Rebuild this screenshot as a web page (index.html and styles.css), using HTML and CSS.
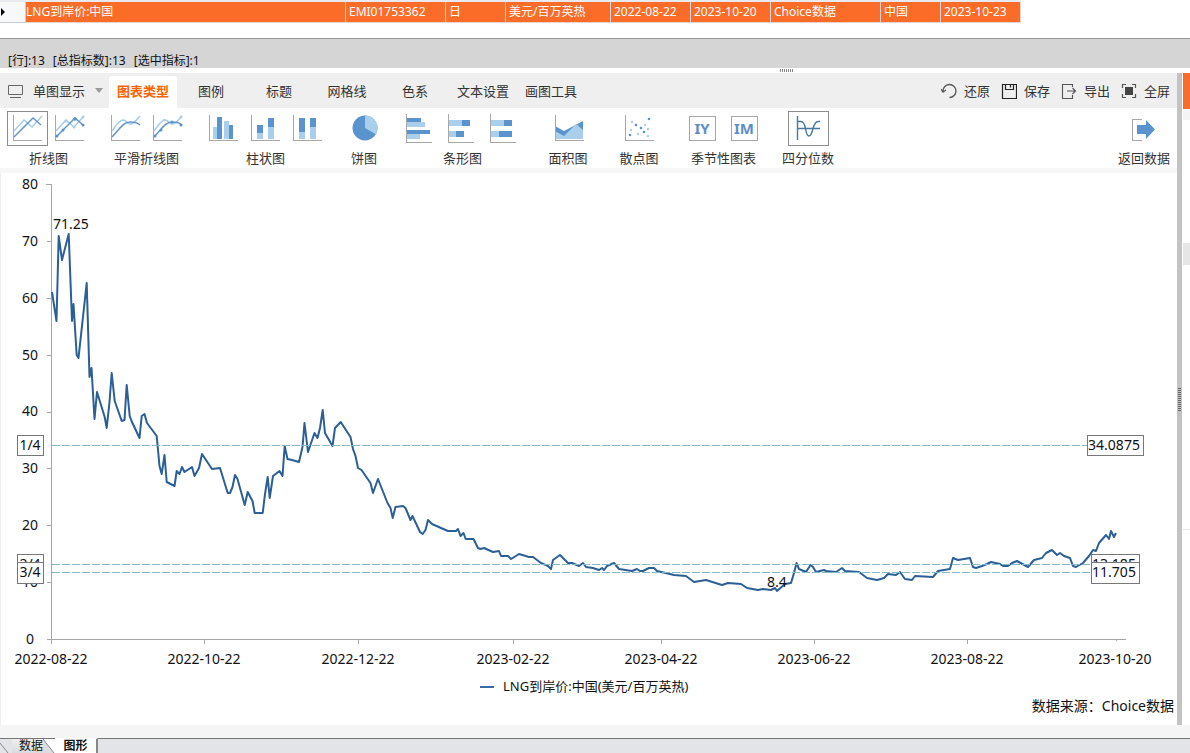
FILE: index.html
```html
<!DOCTYPE html>
<html lang="zh-CN">
<head>
  <meta charset="UTF-8" />
  <title>LNG到岸价:中国</title>
  <link rel="stylesheet" href="styles.css">
</head>
<body>

  <!-- Selected indicator row -->
  <table class="indicators">
    <colgroup>
      <col class="col-mark"><col class="col-name"><col class="col-code"><col class="col-freq"><col class="col-unit">
      <col class="col-date"><col class="col-date"><col class="col-source"><col class="col-area"><col class="col-date">
    </colgroup>
    <tr>
      <th scope="row"><svg width="5" height="8" viewBox="0 0 5 8"><path d="M1 0L5 4L1 8Z"/></svg></th>
      <td>LNG到岸价:中国</td>
      <td>EMI01753362</td>
      <td>日</td>
      <td>美元/百万英热</td>
      <td>2022-08-22</td>
      <td>2023-10-20</td>
      <td>Choice数据</td>
      <td>中国</td>
      <td>2023-10-23</td>
    </tr>
  </table>

  <div class="status">
    <span>[行]:13</span>
    <span>[总指标数]:13</span>
    <span>[选中指标]:1</span>
  </div>
  <div class="splitter"><i></i></div>

  <div class="workspace">
    <main class="panel">

      <!-- Menu tabs -->
      <nav class="menu">
        <div class="view">
          <svg width="16" height="16" viewBox="0 0 16 16" fill="none" stroke="#666"><path d="M1.5 2.5h14v9h-14zM3 14.5h11"/></svg>
          <select aria-label="显示方式">
            <option>单图显示</option>
          </select>
          <svg class="caret" width="8" height="6" viewBox="0 0 8 6"><path d="M0 0h8L4 5Z" fill="#999"/></svg>
        </div>
        <button class="tab active">图表类型</button>
        <button class="tab">图例</button>
        <button class="tab">标题</button>
        <button class="tab">网格线</button>
        <button class="tab">色系</button>
        <button class="tab">文本设置</button>
        <button class="tab">画图工具</button>
        <div class="actions">
          <button>
            <svg width="16" height="16" viewBox="0 0 16 16" fill="none" stroke="#555" stroke-width="1.3"><path d="M2 8.5A6.5 6.5 0 1 1 8.5 14.5M0 6l2 3L5 7"/></svg>
            还原
          </button>
          <button>
            <svg width="16" height="16" viewBox="0 0 16 16" fill="none" stroke="#222" stroke-width="1.2"><path d="M1.5 1.5h14v14h-14zM4.500 1.5v5h8v-5M9.500 2v2.500"/></svg>
            保存
          </button>
          <button>
            <svg width="16" height="16" viewBox="0 0 16 16" fill="none" stroke="#555" stroke-width="1.1"><path d="M11.5 4V1.5h-10v14h10V12M6 8h8.5M11.5 5l3 3l-3 3"/></svg>
            导出
          </button>
          <button>
            <svg width="16" height="16" viewBox="0 0 16 16" fill="none" stroke="#555" stroke-width="1.2"><path d="M1.5 5V1.5H5M11 1.5h3.5V5M14.5 11v3.5H11M5 14.500H1.5V11"/><path d="M4 4h8v8H4z" fill="#444" stroke="none"/></svg>
            全屏
          </button>
        </div>
      </nav>

      <!-- Chart types -->
      <div class="types">
        <div class="group">
          <div class="icons">
            <button class="selected" aria-label="折线图">
              <svg viewBox="0 0 39 33"><path class="axis" d="M5 3v25h29"/><path class="line light" d="M6 19L16 8L24 15L34 4"/><path class="line dark" d="M6 25L25 6L33 13"/></svg>
            </button>
            <button aria-label="带标记折线图">
              <svg viewBox="0 0 39 33"><path class="axis" d="M5 3v25h29"/><path class="line light" d="M6 19L16 8L24 15L34 4"/><path class="line dark" d="M6 25L25 6L33 13"/><g class="fill-dark"><circle cx="7" cy="24" r="1.5"/><circle cx="13" cy="18" r="1.5"/><circle cx="25" cy="7" r="1.8"/><circle cx="33" cy="13" r="1.5"/></g><g class="fill-light"><circle cx="16" cy="9" r="1.5"/><circle cx="24" cy="15" r="1.5"/><circle cx="33" cy="5" r="1.5"/></g></svg>
            </button>
          </div>
          <span>折线图</span>
        </div>

        <div class="group">
          <div class="icons">
            <button aria-label="平滑折线图">
              <svg viewBox="0 0 39 33"><path class="axis" d="M5 3v25h29"/><path class="line light" d="M6 19C10 14 13 8 17 8S21 13 25 12S30 8 34 4"/><path class="line dark" d="M6 25C14 17 17 10 24 10S31 11 34 13"/></svg>
            </button>
            <button aria-label="带标记平滑折线图">
              <svg viewBox="0 0 39 33"><path class="axis" d="M5 3v25h29"/><path class="line light" d="M6 19C10 14 13 8 17 8S21 13 25 12S30 8 34 4"/><path class="line dark" d="M6 25C14 17 17 10 24 10S31 11 34 13"/><g class="fill-dark"><circle cx="7" cy="24" r="1.5"/><circle cx="13" cy="18" r="1.5"/><circle cx="24" cy="10" r="1.5"/><circle cx="33" cy="13" r="1.5"/></g><g class="fill-light"><circle cx="16" cy="8" r="1.3"/><circle cx="33" cy="5" r="1.5"/></g></svg>
            </button>
          </div>
          <span>平滑折线图</span>
        </div>

        <div class="group">
          <div class="icons">
            <button aria-label="柱状图">
              <svg viewBox="0 0 39 33"><path class="axis" d="M5 3v25h29"/><path class="fill-light" d="M9 15h4v12H9zM20 9h5v18h-5z"/><path class="fill-dark" d="M13 5h5v22h-5zM25 13h4v14h-4z"/></svg>
            </button>
            <button aria-label="堆积柱状图">
              <svg viewBox="0 0 39 33"><path class="axis" d="M5 3v25h29"/><path class="fill-light" d="M11 21h6v6h-6zM22 15h6v12h-6z"/><path class="fill-dark" d="M11 13h6v8h-6zM22 6h6v9h-6z"/></svg>
            </button>
            <button aria-label="百分比柱状图">
              <svg viewBox="0 0 39 33"><path class="axis" d="M5 3v25h29"/><path class="fill-light" d="M11 20h6v7h-6zM22 15h6v12h-6z"/><path class="fill-dark" d="M11 6h6v14h-6zM22 6h6v9h-6z"/></svg>
            </button>
          </div>
          <span>柱状图</span>
        </div>

        <div class="group narrow">
          <div class="icons">
            <button aria-label="饼图">
              <svg viewBox="0 0 39 33"><circle class="fill-dark" cx="20" cy="16" r="12.5"/><path class="fill-light" d="M20 16V3.500A12.5 12.5 0 0 1 30.800 22.300Z"/></svg>
            </button>
          </div>
          <span>饼图</span>
        </div>

        <div class="group">
          <div class="icons">
            <button aria-label="条形图">
              <svg viewBox="0 0 39 33"><path class="axis" d="M5 2v28h26"/><path class="fill-light" d="M6 10h18v5H6zM6 22h13v5H6z"/><path class="fill-dark" d="M6 6h14v4H6zM6 18h23v4H6z"/></svg>
            </button>
            <button aria-label="堆积条形图">
              <svg viewBox="0 0 39 33"><path class="axis" d="M5 2v28h26"/><path class="fill-light" d="M6 8h13v6H6zM6 19h7v6H6z"/><path class="fill-dark" d="M19 8h8v6h-8zM13 19h8v6h-8z"/></svg>
            </button>
            <button aria-label="百分比条形图">
              <svg viewBox="0 0 39 33"><path class="axis" d="M5 2v28h26"/><path class="fill-light" d="M6 8h13v6H6zM6 19h8v6H6z"/><path class="fill-dark" d="M19 8h8v6h-8zM14 19h13v6H14z"/></svg>
            </button>
          </div>
          <span>条形图</span>
        </div>

        <div class="group single">
          <div class="icons">
            <button aria-label="面积图">
              <svg viewBox="0 0 39 33"><path class="fill-dark" d="M6 14L15 19L34 9V27H6Z"/><path class="fill-light" d="M6 19L15 24L27 12L34 18V27H6Z"/><path class="axis" d="M6 3v25h29"/></svg>
            </button>
          </div>
          <span>面积图</span>
        </div>

        <div class="group single">
          <div class="icons">
            <button aria-label="散点图">
              <svg viewBox="0 0 39 33"><path class="axis" d="M5 3v25h29"/><g class="fill-dark"><circle cx="29" cy="7" r="1.3"/><circle cx="16" cy="13" r="1.3"/><circle cx="21" cy="16" r="1.3"/><circle cx="24" cy="20" r="1.3"/><circle cx="10" cy="23" r="1.3"/></g><g class="fill-light"><circle cx="12" cy="10" r="1.2"/><circle cx="25" cy="13" r="1.2"/><circle cx="11" cy="18" r="1.2"/><circle cx="28" cy="17" r="1.2"/><circle cx="18" cy="22" r="1.2"/><circle cx="28" cy="24" r="1.2"/></g></svg>
            </button>
          </div>
          <span>散点图</span>
        </div>

        <div class="group">
          <div class="icons">
            <button aria-label="年度季节性图表">
              <svg viewBox="0 0 39 33"><path class="axis" d="M6 4h26v24H6z"/><text class="season" x="19" y="22">IY</text></svg>
            </button>
            <button aria-label="月度季节性图表">
              <svg viewBox="0 0 39 33"><path class="axis" d="M6 4h26v24H6z"/><text class="season" x="19" y="22">IM</text></svg>
            </button>
          </div>
          <span>季节性图表</span>
        </div>

        <div class="group single">
          <div class="icons">
            <button class="selected" aria-label="四分位数">
              <svg viewBox="0 0 39 33" fill="none" stroke="#47789f" stroke-width="1.4"><path d="M8.500 4v24M8.500 16.500H31M8.500 9.500H12C18 9.500 15.500 24 20 24S23 9.500 29 9.500H31"/></svg>
            </button>
          </div>
          <span>四分位数</span>
        </div>

        <div class="group back">
          <div class="icons">
            <button aria-label="返回数据">
              <svg viewBox="0 0 39 33"><path class="axis" d="M18 7H8v21h10"/><path class="fill-dark" d="M13 13h9V8l9 9.500l-9 9.500v-5h-9z"/></svg>
            </button>
          </div>
          <span>返回数据</span>
        </div>
      </div>

      <!-- Price chart -->
      <svg class="chart" viewBox="0 173 1177 552" role="img" aria-label="LNG到岸价:中国(美元/百万英热)">
        <path class="frame" d="M51 184V639H1126M46 184h5M47 241h4M47 298h4M47 355h4M47 412h4M47 468h4M47 525h4M47 582h4M47 639h4M51 639v5M204 639v5M358 639v5M513 639v5M661 639v5M814 639v5M967 639v5M1116 639v2"/>

        <g class="ylabels">
          <text x="30" y="189">80</text>
          <text x="30" y="246">70</text>
          <text x="30" y="303">60</text>
          <text x="30" y="360">50</text>
          <text x="30" y="416">40</text>
          <text x="30" y="473">30</text>
          <text x="30" y="530">20</text>
          <text x="30" y="587">10</text>
          <text x="30" y="644">0</text>
        </g>
        <g class="xlabels">
          <text x="51" y="664">2022-08-22</text>
          <text x="204" y="664">2022-10-22</text>
          <text x="358" y="664">2022-12-22</text>
          <text x="513" y="664">2023-02-22</text>
          <text x="661" y="664">2023-04-22</text>
          <text x="814" y="664">2023-06-22</text>
          <text x="967" y="664">2023-08-22</text>
          <text x="1115" y="664">2023-10-20</text>
        </g>

        <polyline class="price" points="52,292 56.5,321 58.7,236 62,260 68.7,234 72,321 73.5,304 76.7,355 78.5,358 86.7,283 89.5,377 91.5,368 94.5,419 97,392 104.7,417 106.7,428 109.5,402 111.7,373 114.7,401 121.7,421 124.5,420 126.7,385 129.7,416 131.5,421 139.5,438 141.7,416 144.5,414 147,423 156.7,436 159.5,466 161.7,474 164.5,455 166.7,482 174.5,486 176.7,471 179.5,474 182,467 184.5,472 192,467 194.5,476 199,468 202,454 212,469 220,468 227.7,493 230,493 232.5,487 235,475 237.5,479 244.7,505 247.7,492 252.5,501 254.7,513 262.7,513 265,494 267.7,477 269.7,498 273,476 279.5,471 282.5,476 284.7,446 287.5,459 292,460 299,462 302.5,447 304.5,423 308,452 314.5,433 317.5,438 320,428 322.7,410 325,433 332.5,446 335,428 340.7,422 350.5,437 353,449 355.5,456 358,468 361.5,470 370.5,483 373,493 378,479 387.5,503 390.5,508 392.7,518 395.5,507 403,506 405.5,508 408,514 410.5,520 412.5,516 420,532 422.7,534 425.5,530 428,520 432,524 441,528 448,531 456,531 458,529 460.5,536 463.5,533 465.7,539 473.5,539 478,548 480.5,549 484,548 493,552 499,551 501,556 508,556 511,559 519,554 529,557 533,557 541,563 548,566 551,569 553,560 560,555 568,563 572,563 579,566 583,563 586,567 593,568 599,570 602,568 604,570 607,566 614,563 619,569 632,571 637,569 640,571 643,571 649,568 654,568 657,571 674,575 686,576 694,582 706,580 722,585 728,583 741,584 747,588 758,590 763,589 771,590 775,588 777,591 785,584 791,583 794,573 796.5,563 799,569 806,572 810.5,565 813,567 816,572 824,570 826,571 836,572 842,568 845,571 859,572 867,578 877,580 884,578 888,574 896,575 900,572 905,579 912,580 915,576 933,577 938,571 950,569 953,558 958,560 970,558 973,567 976,568 982,566 987,564 991,562 1000,564 1003,566 1008,566 1012,563 1017,561 1028,567 1034,560 1042,558 1046,553 1052,550 1057,555 1060,553 1064,556 1070,558 1073,566 1076,567 1083,563 1089,556 1093,550 1096,551 1099,543 1106,535 1109,539 1111,531 1114,537 1116,533"/>

        <!-- Quartile lines -->
        <path class="quartile" d="M52 445H1087M52 564H1091M52 572H1091"/>

        <text x="53" y="229">71.25</text>
        <text x="767" y="587">8.4</text>

        <g class="tags">
          <rect x="17" y="435" width="26" height="20"/><text x="30" y="450">1/4</text>
          <rect x="1087" y="435" width="56" height="20"/><text x="1114" y="450">34.0875</text>
          <rect x="17" y="554" width="26" height="20"/><text x="30" y="569">2/4</text>
          <rect x="1091" y="554" width="48" height="20"/><text x="1114" y="569">13.185</text>
          <rect x="17" y="562" width="26" height="21"/><text x="30" y="577">3/4</text>
          <rect x="1091" y="562" width="48" height="21"/><text x="1114" y="577">11.705</text>
        </g>

        <path class="key" d="M480 687h14"/>
        <text class="legend" x="503" y="691">LNG到岸价:中国(美元/百万英热)</text>
        <text class="source" x="1174" y="711">数据来源：Choice数据</text>
      </svg>
    </main>

    <div class="divider"><i></i></div>
    <aside class="side">
      <div class="side-active"></div>
      <div class="side-head"></div>
      <div class="side-thumb"></div>
      <div class="side-line"></div>
    </aside>
  </div>

  <!-- Sheet tabs -->
  <footer class="sheets">
    <svg width="12" height="14" viewBox="0 0 12 14"><path d="M0 4L8 14" fill="none" stroke="#888"/></svg>
    <button class="sheet data">数据</button>
    <svg width="12" height="14" viewBox="0 0 12 14"><path d="M0 0L11 14H0Z" fill="#dcdde0"/><path d="M0 0H12V14H11Z" fill="#fff"/><path d="M0 0L11 14" stroke="#888"/></svg>
    <button class="sheet current">图形</button>
  </footer>

</body>
</html>
```
FILE: styles.css
```css
* {
  box-sizing: border-box;
}
body {
  font-family: "Noto Sans", "Noto Sans CJK SC", sans-serif;
  font-size: 13px;
  margin: 0;
  background: #fff;
  color: #333;
  min-height: 100vh;
  display: flex;
  flex-direction: column;
}
button, select {
  font: inherit;
  color: inherit;
  background: none;
  border: none;
  padding: 0;
  white-space: nowrap;
  cursor: pointer;
}
svg {
  display: block;
  flex: none;
}

/* indicator table */
.indicators {
  table-layout: fixed;
  width: 1020px;
  border-collapse: separate;
  border-spacing: 0;
  border-top: 2px solid #e8eaf0;
  font-size: 12px;
  line-height: 20px;
  margin-bottom: 15px;
}
.indicators th {
  padding: 0;
  background: #f7f8fa;
  border-right: 1px solid #c9ccd6;
  border-bottom: 1px solid #c9ccd6;
}
.indicators td {
  padding: 0 0 0 3px;
  background: #fa6c28;
  color: #fff;
  border-right: 1px solid #e6d6d0;
  border-bottom: 1px solid #e6d6d0;
  white-space: nowrap;
}
.indicators td:nth-child(2) {
  padding-left: 0;
}
.col-mark { width: 26px; }
.col-name { width: 320px; }
.col-code { width: 100px; }
.col-freq { width: 60px; }
.col-unit { width: 105px; }
.col-date { width: 80px; }
.col-source { width: 110px; }
.col-area { width: 60px; }

.status {
  display: flex;
  gap: 8px;
  height: 30px;
  padding: 14px 8px 0;
  background: #d5d5d5;
  border-top: 1px solid #999;
  color: #111;
  font-size: 12px;
  line-height: 16px;
}
.splitter {
  height: 5px;
  padding-left: 384px;
  display: flex;
  justify-content: center;
}
.splitter i {
  width: 14px;
  height: 3px;
  margin-top: 1px;
  background: repeating-linear-gradient(90deg, #888 0 1px, #fff 1px 2px);
}

/* workspace */
.workspace {
  display: flex;
}
.panel {
  flex: 1;
  min-width: 0;
}
.menu {
  display: flex;
  height: 35px;
  background: #efefef;
}
.view {
  display: flex;
  align-items: center;
  width: 109px;
  padding-left: 7px;
}
.view select {
  width: 70px;
  margin-left: 10px;
  appearance: none;
}
.caret {
  margin-left: -8px;
  pointer-events: none;
}
.tab {
  width: 68px;
}
.tab.active {
  background: #fff;
  color: #fa6400;
  font-weight: bold;
  margin-top: 3px;
  padding-bottom: 4px;
  border-radius: 3px 3px 0 0;
}
.actions {
  display: flex;
  gap: 11px;
  margin-left: auto;
  padding-right: 7px;
}
.actions button {
  display: flex;
  align-items: center;
  gap: 7px;
}

/* chart type icons */
.types {
  display: flex;
  gap: 15px;
  height: 65px;
  padding: 3px 7px 0;
  border-bottom: 5px solid #f7f7f7;
}
.group {
  display: flex;
  flex-direction: column;
  align-items: center;
  gap: 3px;
  line-height: 18px;
}
.group.narrow {
  width: 42px;
}
.group.single {
  width: 56px;
}
.group.back {
  margin-left: auto;
}
.icons {
  display: flex;
  gap: 1px;
}
.icons button {
  width: 41px;
  height: 35px;
  border: 1px solid transparent;
}
.icons button.selected {
  border-color: #8c8c8c;
}
.icons svg {
  width: 39px;
  height: 33px;
}
.axis {
  fill: none;
  stroke: #a8a8a8;
  shape-rendering: crispEdges;
}
.line {
  fill: none;
  stroke-width: 1.5px;
}
.line.light { stroke: #a6cbe8; }
.line.dark { stroke: #6494cc; }
.fill-light { fill: #a9cfec; }
.fill-dark { fill: #5b93cf; }
.season {
  fill: #5b8fc9;
  font-size: 15px;
  font-weight: bold;
  text-anchor: middle;
}

/* chart */
.chart {
  width: 100%;
  height: auto;
  background: linear-gradient(90deg, #eee 1px, #fff 1px);
  font-size: 14px;
  fill: #111;
}
.frame {
  fill: none;
  stroke: #a6a6a6;
  shape-rendering: crispEdges;
}
.xlabels, .ylabels, .tags {
  text-anchor: middle;
}
.price {
  fill: none;
  stroke: #2b5f96;
  stroke-width: 2px;
  stroke-linejoin: round;
}
.quartile {
  fill: none;
  stroke: #84b9c9;
  stroke-dasharray: 8 2;
  shape-rendering: crispEdges;
}
.tags rect {
  fill: #fff;
  stroke: #777;
  shape-rendering: crispEdges;
}
.key {
  stroke: #3b6ba5;
  stroke-width: 2px;
}
.legend {
  font-size: 13px;
}
.source {
  text-anchor: end;
}

/* right edge */
.divider {
  width: 5px;
  background: #c3c3c3;
  display: flex;
  align-items: center;
  justify-content: center;
}
.divider i {
  width: 3px;
  height: 23px;
  background: repeating-linear-gradient(#666 0 1px, #c3c3c3 1px 2px);
}
.side {
  width: 8px;
  padding-left: 1px;
}
.side-active {
  height: 36px;
  background: #fa6c28;
}
.side-head {
  height: 11px;
  background: #f4f4f4;
}
.side-thumb {
  height: 22px;
  margin-top: 123px;
  background: #e6e6e6;
}
.side-line {
  height: 1px;
  margin-top: 264px;
  background: #e6e6e6;
}

/* sheet tabs */
.sheets {
  display: flex;
  height: 28px;
  border-top: 13px solid #f5f5f5;
  background: linear-gradient(#777 1px, #e2e4e7 1px);
  color: #111;
  font-size: 12px;
}
.sheets svg {
  margin-top: 1px;
}
.sheet {
  line-height: 14px;
}
.sheet.data {
  width: 31px;
  padding-left: 7px;
  border-top: 1px solid #777;
  background: linear-gradient(#f0f0f0, #d8dadd);
}
.sheet.current {
  width: 43px;
  border-right: 2px solid #888;
  border-top: 1px solid #fff;
  background: #fff;
  font-weight: bold;
}
```
